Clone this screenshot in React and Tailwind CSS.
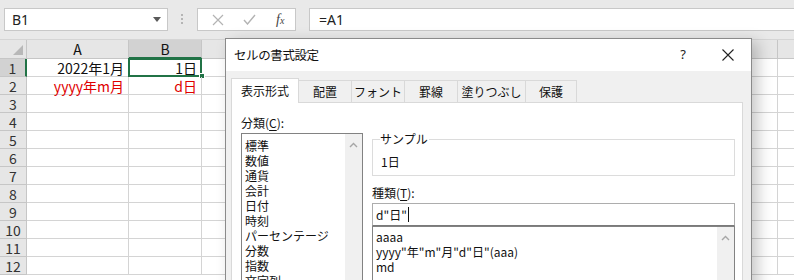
import React from "react";

const jp = "font-['Noto_Sans_CJK_JP',sans-serif]";
const otherCols = Array.from({ length: 9 }, (_, i) => i);
const categories = ["標準", "数値", "通貨", "会計", "日付", "時刻", "パーセンテージ", "分数", "指数", "文字列", "その他", "ユーザー定義"];
const formats = ["aaaa", 'yyyy"年"m"月"d"日"(aaa)', "md", "ggge", "gggge"];
const tabs = [
  { label: "表示形式", w: "w-[68px]", active: true },
  { label: "配置", w: "w-[53px]" },
  { label: "フォント", w: "w-[53px]" },
  { label: "罫線", w: "w-[53px]" },
  { label: "塗りつぶし", w: "w-[68px]" },
  { label: "保護", w: "w-[51px]" },
];

function ChevronUp() {
  return (
    <svg width="9" height="6" viewBox="0 0 9 6" className="block">
      <path d="M1 5 L4.5 1.5 L8 5" fill="none" stroke="#a6a6a6" strokeWidth="1.4" />
    </svg>
  );
}

function FormulaBar() {
  return (
    <div className="flex h-[40px] items-start border-b border-[#d5d5d5] bg-[#e9e9e9] pl-[4px] pt-[8px]">
      <div className="flex h-[23px] w-[164px] shrink-0 items-center justify-between border border-[#c8c8c8] bg-white pl-[7px] pr-[6px]">
        <span className="font-['Noto_Sans',sans-serif] text-[14px] leading-none text-[#222]">B1</span>
        <svg width="8" height="5" viewBox="0 0 8 5">
          <path d="M0 0 H8 L4 5 Z" fill="#5a5a5a" />
        </svg>
      </div>
      <div className="ml-[13px] mt-[6px] flex flex-col gap-[2px]">
        <span className="block h-[2px] w-[2px] bg-[#b5b5b5]" />
        <span className="block h-[2px] w-[2px] bg-[#b5b5b5]" />
        <span className="block h-[2px] w-[2px] bg-[#b5b5b5]" />
      </div>
      <div className="ml-[14px] flex h-[23px] w-[99px] shrink-0 items-center border border-[#c8c8c8] bg-white">
        <svg width="12" height="12" viewBox="0 0 12 12" className="ml-[14px]">
          <path d="M1 1 L11 11 M11 1 L1 11" stroke="#b3b3b3" strokeWidth="1.2" />
        </svg>
        <svg width="13" height="11" viewBox="0 0 13 11" className="ml-[19px]">
          <path d="M1 6 L4.5 10 L12 1" fill="none" stroke="#b3b3b3" strokeWidth="1.4" />
        </svg>
        <span className="ml-[20px] font-['Liberation_Serif',serif] text-[14px] italic leading-none text-[#444]">
          f<span className="text-[10px]">x</span>
        </span>
      </div>
      <div className="ml-[13px] flex h-[23px] flex-1 items-center border-y border-l border-[#c8c8c8] bg-white pl-[9px]">
        <span className="font-['Noto_Sans',sans-serif] text-[14px] leading-none text-[#222]">=A1</span>
      </div>
    </div>
  );
}

function Grid() {
  const rows = Array.from({ length: 12 }, (_, i) => i + 1);
  return (
    <div className={`${jp} text-[14px] text-[#111]`}>
      <div className="flex h-[19px]">
        <div className="relative w-[27px] shrink-0 border-b border-r border-[#c6c6c6] bg-[#e6e6e6]">
          <svg width="10" height="10" viewBox="0 0 10 10" className="absolute bottom-[3px] right-[3px]">
            <path d="M10 0 V10 H0 Z" fill="#b8b8b8" />
          </svg>
        </div>
        <div className="flex w-[102px] shrink-0 items-center justify-center border-b border-r border-[#c6c6c6] bg-[#e6e6e6] leading-none">A</div>
        <div className="flex w-[73px] shrink-0 items-center justify-center border-b-2 border-r border-b-[#217346] border-r-[#c6c6c6] bg-[#d2d2d2] leading-none">B</div>
        {otherCols.map((c) => (
          <div key={c} className="w-[72px] shrink-0 border-b border-r border-[#c6c6c6] bg-[#e6e6e6]" />
        ))}
      </div>
      {rows.map((r) => (
        <div key={r} className="flex h-[18px]">
          <div
            className={`flex w-[27px] shrink-0 items-center justify-center border-b border-[#c6c6c6] leading-none text-[#333] ${
              r === 1 ? "border-r-2 border-r-[#217346] bg-[#d2d2d2]" : "border-r bg-[#e6e6e6]"
            }`}
          >
            {r}
          </div>
          <div className={`flex w-[102px] shrink-0 items-center justify-end whitespace-nowrap border-b border-r border-[#d4d4d4] pr-[4px] leading-none ${r === 2 ? "text-[#e00000]" : ""}`}>
            {r === 1 ? "2022年1月" : r === 2 ? "yyyy年m月" : ""}
          </div>
          <div className={`relative flex w-[73px] shrink-0 items-center justify-end whitespace-nowrap border-b border-r border-[#d4d4d4] pr-[4px] leading-none ${r === 2 ? "text-[#e00000]" : ""}`}>
            {r === 1 ? "1日" : r === 2 ? "d日" : ""}
            {r === 1 && (
              <>
                <span className="absolute -left-[1px] -top-[1px] h-[19px] w-[74px] border-2 border-[#217346]" />
                <span className="absolute -bottom-[3px] -right-[4px] h-[6px] w-[6px] border border-white bg-[#217346]" />
              </>
            )}
          </div>
          {otherCols.map((c) => (
            <div key={c} className="w-[72px] shrink-0 border-b border-r border-[#d4d4d4]" />
          ))}
        </div>
      ))}
    </div>
  );
}

function ListBox({ items, className, padTop }) {
  return (
    <div className={`flex border border-[#828282] bg-white ${className}`}>
      <div className={`flex-1 overflow-hidden pl-[3px] ${padTop}`}>
        {items.map((it) => (
          <div key={it} className="h-[15px] whitespace-nowrap text-[12px] leading-[15px] text-[#111]">
            {it}
          </div>
        ))}
      </div>
      <div className="flex w-[17px] shrink-0 justify-center bg-[#f0f0f0] pt-[8px]">
        <ChevronUp />
      </div>
    </div>
  );
}

function Dialog() {
  return (
    <div className={`${jp} absolute left-[225px] top-[38px] w-[527px] border border-[#8a8a8a] bg-[#f0f0f0] shadow-[6px_4px_14px_rgba(0,0,0,0.22)]`}>
      <div className="flex h-[32px] items-center bg-white pl-[8px]">
        <span className="text-[12.5px] tracking-[-0.4px] text-[#111]">セルの書式設定</span>
        <span className="ml-auto font-['Noto_Sans',sans-serif] text-[13px] text-[#222]">?</span>
        <svg width="12" height="12" viewBox="0 0 12 12" className="ml-[36px] mr-[17px]">
          <path d="M0.5 0.5 L11.5 11.5 M11.5 0.5 L0.5 11.5" stroke="#222" strokeWidth="1.1" />
        </svg>
      </div>
      <div className="pl-[5px] pr-[8px] pt-[7px]">
        <div className="flex h-[24px] items-end">
          {tabs.map((t) =>
            t.active ? (
              <div key={t.label} className={`${t.w} relative z-10 -mb-[1px] flex h-[25px] items-center justify-center border-x border-t border-[#d9d9d9] bg-white text-[12px] text-[#111]`}>
                {t.label}
              </div>
            ) : (
              <div key={t.label} className={`${t.w} flex h-[22px] items-center justify-center border-r border-t border-[#d9d9d9] bg-[#f0f0f0] text-[12px] text-[#111]`}>
                {t.label}
              </div>
            )
          )}
        </div>
        <div className="flex h-[200px] w-[512px] border border-[#d9d9d9] bg-white">
          <div className="ml-[9px] w-[122px] shrink-0 pt-[10px]">
            <div className="h-[20px] text-[12px] leading-[20px] text-[#111]">
              分類(<span className="underline underline-offset-2">C</span>):
            </div>
            <ListBox items={categories} className="h-[160px]" padTop="pt-[4px]" />
          </div>
          <div className="ml-[9px] w-[363px] shrink-0 pt-[36px]">
            <div className="relative h-[37px] border border-[#dcdcdc]">
              <span className="absolute -top-[9px] left-[7px] bg-white pr-[1px] text-[12px] leading-[16px] text-[#111]">サンプル</span>
              <span className="absolute left-[8px] top-[14px] text-[12px] leading-[16px] text-[#111]">1日</span>
            </div>
            <div className="mt-[7px] h-[20px] text-[12px] leading-[20px] text-[#111]">
              種類(<span className="underline underline-offset-2">T</span>):
            </div>
            <div className="flex h-[23px] items-center border border-[#adadad] border-b-[#7a7a7a] bg-white pl-[3px] text-[12px] text-[#111]">
              d"日"
              <span className="ml-[1px] block h-[15px] w-[1px] bg-[#111]" />
            </div>
            <ListBox items={formats} className="h-[80px]" padTop="pt-[2px]" />
          </div>
        </div>
      </div>
    </div>
  );
}

export default function App() {
  return (
    <div className="relative h-[280px] w-[794px] overflow-hidden bg-white">
      <FormulaBar />
      <Grid />
      <Dialog />
    </div>
  );
}
